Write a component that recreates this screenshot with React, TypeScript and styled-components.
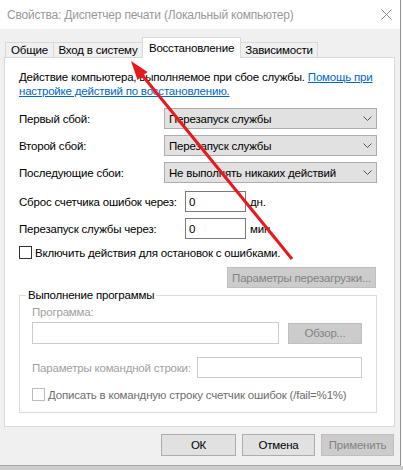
import styled, { createGlobalStyle } from "styled-components";

const GlobalStyle = createGlobalStyle`
  html, body {
    margin: 0;
    padding: 0;
    background: #ffffff;
  }
  body {
    font-family: "Liberation Sans", "Noto Sans", Arial, sans-serif;
    font-size: 11.5px;
    letter-spacing: -0.2px;
    color: #000;
    white-space: nowrap;
  }
`;

const Screen = styled.div`
  width: 403px;
  height: 470px;
  display: flex;
  flex-direction: column;
  overflow: hidden;
`;

const Window = styled.div`
  position: relative;
  width: 401px;
  height: 466px;
  box-sizing: border-box;
  background: #f0f0f0;
  border-right: 1px solid #8c9096;
  border-bottom: 1px solid #a6a6a6;
  display: flex;
  flex-direction: column;
`;

const BottomStrip = styled.div`
  flex: 1;
  background: #cdcdcd;
`;

const TitleBar = styled.div`
  height: 29px;
  background: #fff;
  display: flex;
  align-items: center;
  justify-content: space-between;
  padding: 0 8px 0 7px;
`;

const Title = styled.span`
  color: #999;
  font-size: 12px;
`;

const Body = styled.div`
  flex: 1;
  display: flex;
  flex-direction: column;
  padding: 8px 0 0 4px;
`;

const Tabs = styled.div`
  height: 20px;
  display: flex;
  align-items: flex-end;
  padding-left: 1px;
  position: relative;
  z-index: 1;
`;

const Tab = styled.div<{ $w: number; $active?: boolean }>`
  width: ${(p) => p.$w}px;
  height: ${(p) => (p.$active ? 21 : 15)}px;
  margin-bottom: ${(p) => (p.$active ? -1 : 0)}px;
  margin-left: -1px;
  box-sizing: border-box;
  border: 1px solid #d9d9d9;
  border-bottom: none;
  background: ${(p) => (p.$active ? "#fff" : "#f0f0f0")};
  display: flex;
  align-items: center;
  justify-content: center;
  &:first-child {
    margin-left: 0;
  }
`;

const Panel = styled.div`
  width: 391px;
  height: 370px;
  box-sizing: border-box;
  background: #fff;
  border: 1px solid #d9d9d9;
  padding: 12px 17px 0 14px;
  display: flex;
  flex-direction: column;
`;

const Description = styled.p`
  margin: 0;
  line-height: 14px;
`;

const Link = styled.a`
  color: #0066cc;
  text-decoration: underline;
`;

const FieldRow = styled.div<{ $top: number }>`
  display: grid;
  grid-template-columns: 145px 1fr;
  align-items: center;
  height: 21px;
  margin-top: ${(p) => p.$top}px;
`;

const Select = styled.div`
  height: 21px;
  box-sizing: border-box;
  border: 1px solid #adadad;
  background: #e1e1e1;
  padding: 0 4px 0 4px;
  display: flex;
  align-items: center;
  justify-content: space-between;
`;

const SpinRow = styled.div<{ $top: number }>`
  display: flex;
  align-items: center;
  height: 21px;
  margin-top: ${(p) => p.$top}px;
`;

const SpinLabel = styled.span`
  width: 166px;
`;

const Input = styled.div<{ $w?: number; $h?: number; $disabled?: boolean }>`
  width: ${(p) => (p.$w ? `${p.$w}px` : "auto")};
  flex: ${(p) => (p.$w ? "none" : "1")};
  height: ${(p) => p.$h ?? 21}px;
  box-sizing: border-box;
  border: 1px solid ${(p) => (p.$disabled ? "#cccccc" : "#7a7a7a")};
  background: #fff;
  padding-left: 3px;
  display: flex;
  align-items: center;
`;

const Unit = styled.span`
  margin-left: 4px;
`;

const CheckRow = styled.label<{ $top: number; $disabled?: boolean }>`
  display: flex;
  align-items: center;
  gap: 3px;
  height: 13px;
  margin-top: ${(p) => p.$top}px;
  color: ${(p) => (p.$disabled ? "#6d6d6d" : "#000")};
`;

const Box = styled.span<{ $disabled?: boolean }>`
  width: 13px;
  height: 13px;
  box-sizing: border-box;
  border: 1px solid ${(p) => (p.$disabled ? "#bcbcbc" : "#333")};
  background: #fff;
`;

const Button = styled.button<{ $w: number; $h?: number; $disabled?: boolean }>`
  width: ${(p) => p.$w}px;
  height: ${(p) => p.$h ?? 22}px;
  box-sizing: border-box;
  padding: 0;
  font: inherit;
  letter-spacing: inherit;
  border: 1px solid ${(p) => (p.$disabled ? "#bfbfbf" : "#adadad")};
  background: ${(p) => (p.$disabled ? "#cccccc" : "#e1e1e1")};
  color: ${(p) => (p.$disabled ? "#838383" : "#000")};
`;

const RestartButton = styled(Button)`
  align-self: flex-end;
  margin: 8px 1px 0 0;
`;

const Group = styled.fieldset`
  margin: 0;
  height: 125px;
  box-sizing: border-box;
  border: 1px solid #dcdcdc;
  padding: 0 14px 0 12px;
  display: flex;
  flex-direction: column;
`;

const Legend = styled.legend`
  padding: 0 2px;
  margin-left: -6px;
  line-height: 14px;
`;

const MutedLabel = styled.span<{ $top?: number }>`
  color: #a0a0a0;
  line-height: 14px;
  margin-top: ${(p) => p.$top ?? 0}px;
`;

const ProgramRow = styled.div`
  display: flex;
  align-items: center;
  gap: 9px;
  margin-top: 3px;
`;

const CmdRow = styled.div`
  display: flex;
  align-items: center;
  margin-top: 13px;
`;

const CmdLabel = styled(MutedLabel)`
  width: 165px;
`;

const Footer = styled.div`
  display: flex;
  justify-content: flex-end;
  gap: 6px;
  padding: 7px 6px 0 0;
`;

const ArrowLayer = styled.svg`
  position: absolute;
  left: 0;
  top: 0;
  pointer-events: none;
`;

const Chevron = () => (
  <svg width="9" height="5" viewBox="0 0 9 5">
    <polyline points="0.5,0.5 4.5,4.5 8.5,0.5" fill="none" stroke="#555" strokeWidth="1" />
  </svg>
);

const CloseIcon = () => (
  <svg width="11" height="11" viewBox="0 0 11 11">
    <path d="M0.5 0.5 L10.5 10.5 M10.5 0.5 L0.5 10.5" stroke="#8a8a8a" strokeWidth="1" />
  </svg>
);

export default function App() {
  return (
    <Screen>
      <GlobalStyle />
      <Window>
        <TitleBar>
          <Title>Свойства: Диспетчер печати (Локальный компьютер)</Title>
          <CloseIcon />
        </TitleBar>
        <Body>
          <Tabs>
            <Tab $w={49}>Общие</Tab>
            <Tab $w={90}>Вход в систему</Tab>
            <Tab $w={99} $active>Восстановление</Tab>
            <Tab $w={78}>Зависимости</Tab>
          </Tabs>
          <Panel>
            <Description>
              Действие компьютера, выполняемое при сбое службы. <Link>Помощь при</Link>
              <br />
              <Link>настройке действий по восстановлению.</Link>
            </Description>

            <FieldRow $top={10}>
              <span>Первый сбой:</span>
              <Select>
                Перезапуск службы
                <Chevron />
              </Select>
            </FieldRow>
            <FieldRow $top={6}>
              <span>Второй сбой:</span>
              <Select>
                Перезапуск службы
                <Chevron />
              </Select>
            </FieldRow>
            <FieldRow $top={6}>
              <span>Последующие сбои:</span>
              <Select>
                Не выполнять никаких действий
                <Chevron />
              </Select>
            </FieldRow>

            <SpinRow $top={8}>
              <SpinLabel>Сброс счетчика ошибок через:</SpinLabel>
              <Input $w={61}>0</Input>
              <Unit>дн.</Unit>
            </SpinRow>
            <SpinRow $top={6}>
              <SpinLabel>Перезапуск службы через:</SpinLabel>
              <Input $w={61}>0</Input>
              <Unit>мин.</Unit>
            </SpinRow>

            <CheckRow $top={7}>
              <Box />
              Включить действия для остановок с ошибками.
            </CheckRow>

            <RestartButton $w={149} $h={21} $disabled>
              Параметры перезагрузки...
            </RestartButton>

            <Group>
              <Legend>Выполнение программы</Legend>
              <MutedLabel $top={3}>Программа:</MutedLabel>
              <ProgramRow>
                <Input $h={22} $disabled />
                <Button $w={74} $h={21} $disabled>
                  Обзор...
                </Button>
              </ProgramRow>
              <CmdRow>
                <CmdLabel>Параметры командной строки:</CmdLabel>
                <Input $disabled />
              </CmdRow>
              <CheckRow $top={10} $disabled>
                <Box $disabled />
                Дописать в командную строку счетчик ошибок (/fail=%1%)
              </CheckRow>
            </Group>
          </Panel>
          <Footer>
            <Button $w={75}>ОК</Button>
            <Button $w={73}>Отмена</Button>
            <Button $w={73} $disabled>
              Применить
            </Button>
          </Footer>
        </Body>
        <ArrowLayer width="400" height="465" viewBox="0 0 400 465">
          <line x1="292" y1="259" x2="142" y2="75" stroke="#e8191c" strokeWidth="3" />
          <polygon points="131,61 137.5,80 147.5,72" fill="#e8191c" />
        </ArrowLayer>
      </Window>
      <BottomStrip />
    </Screen>
  );
}
